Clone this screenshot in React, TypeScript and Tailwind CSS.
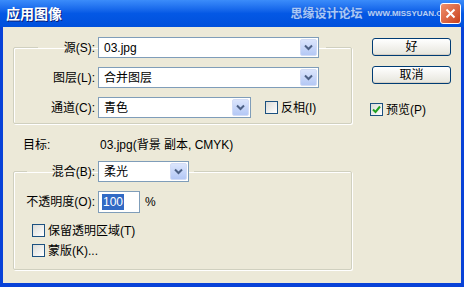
import React from "react";

const font = { fontFamily: '"Liberation Sans", "Noto Sans CJK SC", sans-serif' };

function Chevron() {
  return (
    <svg width="9" height="7" viewBox="0 0 9 7">
      <path d="M1 1.5 L4.5 5 L8 1.5" fill="none" stroke="#4d6185" strokeWidth="2" />
    </svg>
  );
}

function Select({ value, width }: { value: string; width: string }) {
  return (
    <div className={`${width} h-[21px] bg-white border border-[#7f9db9] flex items-center`}>
      <span className="flex-1 pl-[5px] text-[12px] leading-none text-black">{value}</span>
      <div className="w-[17px] h-[17px] mr-[1px] rounded-[2px] border border-[#d2dcf6] bg-linear-to-b from-[#dbe5fc] to-[#b4c8f5] flex items-center justify-center">
        <Chevron />
      </div>
    </div>
  );
}

function Checkbox({ checked }: { checked?: boolean }) {
  return (
    <div className="w-[13px] h-[13px] border border-[#1c5180] bg-linear-to-br from-[#dcdcd7] to-white flex items-center justify-center shrink-0">
      {checked && (
        <svg width="9" height="9" viewBox="0 0 9 9">
          <path d="M1 4.5 L3.5 7 L8 1.5" fill="none" stroke="#21a121" strokeWidth="2" />
        </svg>
      )}
    </div>
  );
}

function Button({ label }: { label: string }) {
  return (
    <div className="w-[79px] h-[18px] rounded-[3px] border border-[#003c74] bg-linear-to-b from-white to-[#e6e5dc] flex items-center justify-center text-[12px] text-black shadow-[inset_0_-1px_0_#d6d0c5]">
      {label}
    </div>
  );
}

const fieldset =
  "border border-[#d0d0bf] rounded-[2px] shadow-[1px_1px_0_#fff,inset_1px_1px_0_#fff]";

export default function App() {
  return (
    <div className="w-[464px] h-[287px] flex flex-col bg-[#0842d8] overflow-hidden" style={font}>
      {/* title bar */}
      <div className="h-[27px] shrink-0 flex items-center bg-linear-to-b from-[#3b8cfa] via-[#0458e5] to-[#0050dc] pl-[6px] pr-[3px]">
        <span className="shrink-0 text-white font-bold text-[14px] leading-none [text-shadow:1px_1px_0_#0a1f7a]">
          应用图像
        </span>
        <span className="ml-auto shrink-0 text-[12px] leading-none text-[#a9c8f6] font-bold [text-shadow:0_0_1px_#2a5bc4]">
          思缘设计论坛
        </span>
        <span className="shrink-0 ml-[5px] -mr-[15px] text-[8px] leading-none font-bold text-[#b4d0f8] [text-shadow:0_0_1px_#2a5bc4]">
          WWW.MISSYUAN.COM
        </span>
        <span className="relative z-10 shrink-0 inline-flex w-[21px] h-[21px] rounded-[3px] border border-white bg-[#d9502a] bg-linear-to-br from-[#f0906c] to-[#c83e18] items-center justify-center">
          <svg width="11" height="11" viewBox="0 0 11 11">
            <path d="M1.5 1.5 L9.5 9.5 M9.5 1.5 L1.5 9.5" stroke="white" strokeWidth="2" />
          </svg>
        </span>
      </div>

      {/* body */}
      <div className="flex-1 mx-[3px] mb-[4px] bg-[#ece9d8] flex text-[12px] text-black leading-none">
        {/* left column */}
        <div className="w-[339px] ml-[10px] flex flex-col">
          <fieldset className={`${fieldset} mt-[10px] pb-[5px]`}>
            <legend className="ml-[24px] flex items-center pr-[7px]">
              <span className="w-[57px] text-right">源(S):</span>
              <div className="ml-[3px]">
                <Select value="03.jpg" width="w-[221px]" />
              </div>
            </legend>
            <div className="mt-[9px] flex items-center">
              <span className="w-[81px] text-right">图层(L):</span>
              <div className="ml-[3px]">
                <Select value="合并图层" width="w-[221px]" />
              </div>
            </div>
            <div className="mt-[9px] flex items-center">
              <span className="w-[81px] text-right">通道(C):</span>
              <div className="ml-[3px]">
                <Select value="青色" width="w-[153px]" />
              </div>
              <div className="ml-[14px] flex items-center">
                <Checkbox />
                <span className="ml-[3px]">反相(I)</span>
              </div>
            </div>
          </fieldset>

          <div className="mt-[13px] flex items-center h-[15px]">
            <span className="ml-[10px] w-[77px]">目标:</span>
            <span>03.jpg(背景 副本, CMYK)</span>
          </div>

          <fieldset className={`${fieldset} mt-[9px] pb-[12px]`}>
            <legend className="ml-[13px] flex items-center pr-[5px]">
              <span className="w-[68px] text-right">混合(B):</span>
              <div className="ml-[3px]">
                <Select value="柔光" width="w-[91px]" />
              </div>
            </legend>
            <div className="mt-[9px] flex items-center">
              <span className="w-[81px] text-right">不透明度(O):</span>
              <div className="ml-[3px] w-[42px] h-[22px] bg-white border border-[#7f9db9] flex items-center pl-[3px]">
                <span className="bg-[#316ac5] text-white px-[1px] py-[2px]">100</span>
              </div>
              <span className="ml-[5px]">%</span>
            </div>
            <div className="mt-[11px] ml-[18px] flex items-center">
              <Checkbox />
              <span className="ml-[3px]">保留透明区域(T)</span>
            </div>
            <div className="mt-[7px] ml-[18px] flex items-center">
              <Checkbox />
              <span className="ml-[3px]">蒙版(K)...</span>
            </div>
          </fieldset>
        </div>

        {/* right column */}
        <div className="ml-[18px] flex flex-col pt-[11px]">
          <div className="ml-[2px]">
            <Button label="好" />
          </div>
          <div className="ml-[2px] mt-[10px]">
            <Button label="取消" />
          </div>
          <div className="mt-[19px] flex items-center">
            <Checkbox checked />
            <span className="ml-[3px]">预览(P)</span>
          </div>
        </div>
      </div>
    </div>
  );
}
